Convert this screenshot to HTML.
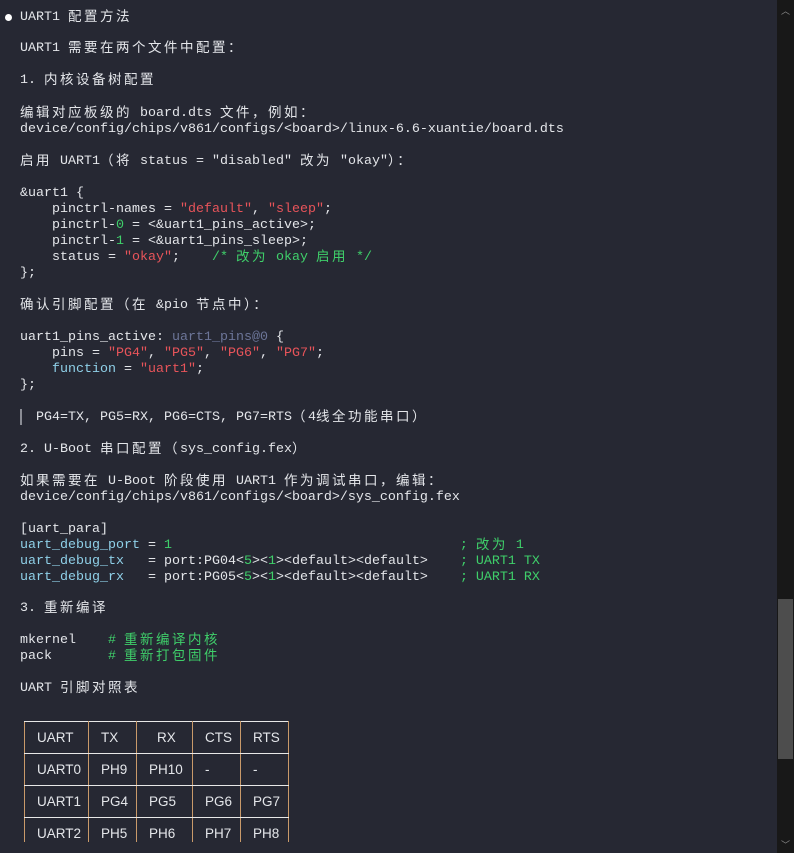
<!DOCTYPE html>
<html><head><meta charset="utf-8"><style>
body{margin:0;width:794px;height:853px;background:#262833;overflow:hidden;position:relative;font-family:"Liberation Mono","Noto Sans CJK SC",monospace;font-size:13.33px;color:#e4e6ea}
.l{position:absolute;left:20px;height:16px;line-height:16px;white-space:pre}
.k{letter-spacing:2.5px;font-size:13.5px;line-height:0;position:relative;top:1px;font-family:"Noto Sans CJK SC",monospace}
.r{color:#e8545a}.g{color:#3fcf6a}.c{color:#8fd0e8}.m{color:#6c7598}
#sb{position:absolute;left:777px;top:0;width:17px;height:853px;background:#181818}
#th{position:absolute;left:778px;top:599px;width:15px;height:160px;background:#4d4d4d}
table{position:absolute;left:24px;top:721px;border-collapse:collapse;font-family:"Liberation Sans","Noto Sans CJK SC",sans-serif;font-size:13.5px}
td{height:31px;border-left:1px solid #c99a6a;border-right:1px solid #c99a6a;border-bottom:1px solid #e8e8e8;padding:0 0 0 12px;text-align:left}
tr:first-child td{border-top:1px solid #e8e8e8}
tr:last-child td{border-bottom:none;height:16px;vertical-align:top;padding-top:8px;line-height:16px}
</style></head><body>
<div style="position:absolute;left:5px;top:14px;width:7px;height:7px;border-radius:50%;background:#fff"></div>
<div class="l" style="top:10px">UART1 <span class="k">配置方法</span></div>
<div class="l" style="top:41px">UART1 <span class="k">需要在两个文件中配置：</span></div>
<div class="l" style="top:73px">1. <span class="k">内核设备树配置</span></div>
<div class="l" style="top:106px"><span class="k">编辑对应板级的</span> board.dts <span class="k">文件，例如：</span></div>
<div class="l" style="top:122px">device/config/chips/v861/configs/&lt;board&gt;/linux-6.6-xuantie/board.dts</div>
<div class="l" style="top:154px"><span class="k">启用</span> UART1<span class="k">（将</span> status = "disabled" <span class="k">改为</span> "okay"<span class="k">）：</span></div>
<div class="l" style="top:186px">&amp;uart1 {</div>
<div class="l" style="top:202px">    pinctrl-names = <span class="r">"default"</span>, <span class="r">"sleep"</span>;</div>
<div class="l" style="top:218px">    pinctrl-<span class="g">0</span> = &lt;&amp;uart1_pins_active&gt;;</div>
<div class="l" style="top:234px">    pinctrl-<span class="g">1</span> = &lt;&amp;uart1_pins_sleep&gt;;</div>
<div class="l" style="top:250px">    status = <span class="r">"okay"</span>;    <span class="g">/* <span class="k">改为</span> okay <span class="k">启用</span> */</span></div>
<div class="l" style="top:266px">};</div>
<div class="l" style="top:298px"><span class="k">确认引脚配置（在</span> &amp;pio <span class="k">节点中）：</span></div>
<div class="l" style="top:330px">uart1_pins_active: <span class="m">uart1_pins@0</span> {</div>
<div class="l" style="top:346px">    pins = <span class="r">"PG4"</span>, <span class="r">"PG5"</span>, <span class="r">"PG6"</span>, <span class="r">"PG7"</span>;</div>
<div class="l" style="top:362px">    <span class="c">function</span> = <span class="r">"uart1"</span>;</div>
<div class="l" style="top:378px">};</div>
<div style="position:absolute;left:20px;top:409px;width:2px;height:16px;background:#8a8c94"></div>
<div class="l" style="top:410px;left:36px">PG4=TX, PG5=RX, PG6=CTS, PG7=RTS<span class="k">（</span>4<span class="k">线全功能串口）</span></div>
<div class="l" style="top:442px">2. U-Boot <span class="k">串口配置（</span>sys_config.fex<span class="k">）</span></div>
<div class="l" style="top:474px"><span class="k">如果需要在</span> U-Boot <span class="k">阶段使用</span> UART1 <span class="k">作为调试串口，编辑：</span></div>
<div class="l" style="top:490px">device/config/chips/v861/configs/&lt;board&gt;/sys_config.fex</div>
<div class="l" style="top:522px">[uart_para]</div>
<div class="l" style="top:538px"><span class="c">uart_debug_port</span> = <span class="g">1</span>                                    <span class="g">; <span class="k">改为</span> 1</span></div>
<div class="l" style="top:554px"><span class="c">uart_debug_tx</span>   = port:PG04&lt;<span class="g">5</span>&gt;&lt;<span class="g">1</span>&gt;&lt;default&gt;&lt;default&gt;    <span class="g">; UART1 TX</span></div>
<div class="l" style="top:570px"><span class="c">uart_debug_rx</span>   = port:PG05&lt;<span class="g">5</span>&gt;&lt;<span class="g">1</span>&gt;&lt;default&gt;&lt;default&gt;    <span class="g">; UART1 RX</span></div>
<div class="l" style="top:601px">3. <span class="k">重新编译</span></div>
<div class="l" style="top:633px">mkernel    <span class="g"># <span class="k">重新编译内核</span></span></div>
<div class="l" style="top:649px">pack       <span class="g"># <span class="k">重新打包固件</span></span></div>
<div class="l" style="top:681px">UART <span class="k">引脚对照表</span></div>
<table>
<tr><td style="width:51px">UART</td><td style="width:35px">TX</td><td style="padding-left:20px;width:35px">RX</td><td style="width:35px">CTS</td><td style="width:35px">RTS</td></tr>
<tr><td>UART0</td><td>PH9</td><td style="padding-left:12px">PH10</td><td>-</td><td>-</td></tr>
<tr><td>UART1</td><td>PG4</td><td style="padding-left:12px">PG5</td><td>PG6</td><td>PG7</td></tr>
<tr><td>UART2</td><td>PH5</td><td style="padding-left:12px">PH6</td><td>PH7</td><td>PH8</td></tr>
</table>
<div id="sb"></div><div id="th"></div>
<div style="position:absolute;left:781px;top:4px;color:#888;font-size:9px;font-family:'DejaVu Sans',sans-serif">︿</div>
<div style="position:absolute;left:781px;top:838px;color:#888;font-size:9px;font-family:'DejaVu Sans',sans-serif">﹀</div>
</body></html>
